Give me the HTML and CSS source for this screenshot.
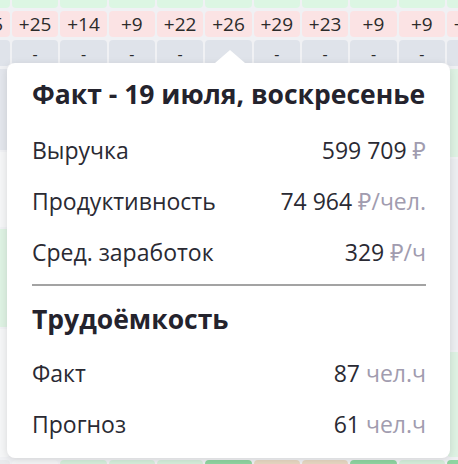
FILE: index.html
```html
<!DOCTYPE html>
<html lang="ru">
<head>
  <meta charset="UTF-8" />
  <meta name="viewport" content="width=device-width, initial-scale=1.0" />
  <title>Факт</title>
  <link rel="stylesheet" href="styles.css">
</head>
<body>
  <div class="grid">
    <div class="row row-green">
      <span class="cell">5</span><span class="cell">6</span><span class="cell">6</span><span class="cell">8</span><span class="cell">6</span><span class="cell">5</span><span class="cell">6</span><span class="cell">6</span><span class="cell">8</span><span class="cell">8</span><span class="cell">6</span>
    </div>
    <div class="row row-pink">
      <span class="cell">+15</span><span class="cell">+25</span><span class="cell">+14</span><span class="cell">+9</span><span class="cell">+22</span><span class="cell">+26</span><span class="cell">+29</span><span class="cell">+23</span><span class="cell">+9</span><span class="cell">+9</span><span class="cell">+18</span>
    </div>
    <div class="row row-grey">
      <span class="cell">-</span><span class="cell">-</span><span class="cell">-</span><span class="cell">-</span><span class="cell">-</span><span class="cell">-</span><span class="cell">-</span><span class="cell">-</span><span class="cell">-</span><span class="cell">-</span><span class="cell">-</span>
    </div>
    <div class="sides">
      <div class="side-col">
        <span class="blk blk-grey" style="height: 81px"></span>
        <span class="blk blk-light" style="height: 75px"></span>
        <span class="blk blk-green" style="height: 98px"></span>
        <span class="blk blk-light" style="height: 128px"></span>
      </div>
      <div class="side-col">
        <span class="blk blk-green" style="height: 88px"></span>
        <span class="blk blk-soft" style="height: 191px"></span>
        <span class="blk blk-green" style="height: 105px"></span>
      </div>
    </div>
    <div class="row row-bottom">
      <span class="cell c-soft"></span><span class="cell c-light"></span><span class="cell c-green"></span><span class="cell c-green"></span><span class="cell c-green"></span><span class="cell c-strong"></span><span class="cell c-beige"></span><span class="cell c-beige"></span><span class="cell c-strong"></span><span class="cell c-green"></span><span class="cell c-strong"></span>
    </div>
  </div>

  <div class="popover">
    <h2 class="pop-title">Факт - 19 июля, воскресенье</h2>
    <div class="pop-row"><span>Выручка</span><span class="val">599 709 <i>₽</i></span></div>
    <div class="pop-row"><span>Продуктивность</span><span class="val">74 964 <i>₽/чел.</i></span></div>
    <div class="pop-row"><span>Сред. заработок</span><span class="val">329 <i>₽/ч</i></span></div>
    <hr class="pop-divider">
    <h3 class="pop-sub">Трудоёмкость</h3>
    <div class="pop-row"><span>Факт</span><span class="val">87 <i>чел.ч</i></span></div>
    <div class="pop-row"><span>Прогноз</span><span class="val">61 <i>чел.ч</i></span></div>
  </div>
</body>
</html>
```

FILE: styles.css
```css
html, body {
  margin: 0;
  height: 100%;
  overflow: hidden;
  background: #f0f1f4;
  font-family: "Open Sans", "Noto Sans", sans-serif;
  color: #2a2a33;
}
.grid {
  margin-top: -18px;
  margin-left: -36.33px;
  width: 529.7px;
  display: flex;
  flex-direction: column;
  gap: 3px;
}
.row {
  display: grid;
  grid-template-columns: repeat(11, 46.33px);
  gap: 2px;
}
.cell {
  height: 26px;
  border-radius: 4px;
  display: flex;
  align-items: center;
  justify-content: center;
  font-size: 19px;
  color: #2b2b2b;
}
.row-green .cell {
  background: #dcf6e3;
  padding-bottom: 4px;
  box-sizing: border-box;
}
.row-pink .cell { background: #fbe3e4; }
.row-grey .cell {
  background: #dfe3ea;
  font-size: 16px;
  padding-top: 2px;
  box-sizing: border-box;
}
.sides {
  display: flex;
  justify-content: space-between;
}
.side-col {
  width: 46.33px;
  display: flex;
  flex-direction: column;
  gap: 2px;
}
.blk { display: block; border-radius: 4px; }
.blk-grey { background: #e3e6ec; }
.blk-light { background: #f5f6f7; }
.blk-green { background: #def2e3; }
.blk-soft { background: #eceef1; }
.row-bottom .cell { height: 20px; }
.c-soft { background: #e9eaec; }
.c-light { background: #f4f5f6; }
.c-green { background: #d5efdb; }
.c-strong { background: #8fd5a1; }
.c-beige { background: #e8d8c3; }

.popover {
  position: absolute;
  left: 7px;
  top: 63px;
  width: 443px;
  height: 395px;
  box-sizing: border-box;
  padding: 15px 24px 0 25px;
  background: #fff;
  border-radius: 8px;
  box-shadow: 0 2px 8px rgba(0, 0, 0, 0.12);
}
.popover::before {
  content: "";
  position: absolute;
  top: -13px;
  left: 208px;
  border-left: 15px solid transparent;
  border-right: 15px solid transparent;
  border-bottom: 13px solid #fff;
}
.pop-title, .pop-sub {
  margin: 0;
  font-size: 26.5px;
  line-height: 32px;
  font-weight: 700;
  color: #24232d;
}
.pop-title { margin-bottom: 14px; }
.pop-sub { margin: 17px 0 12px; }
.pop-row {
  height: 51px;
  display: flex;
  align-items: center;
  justify-content: space-between;
  font-size: 23px;
}
.val i {
  font-style: normal;
  color: #a19caf;
}
.pop-divider {
  margin: 7px 0 0;
  border: none;
  height: 2px;
  background: #a3a3a3;
}
```
